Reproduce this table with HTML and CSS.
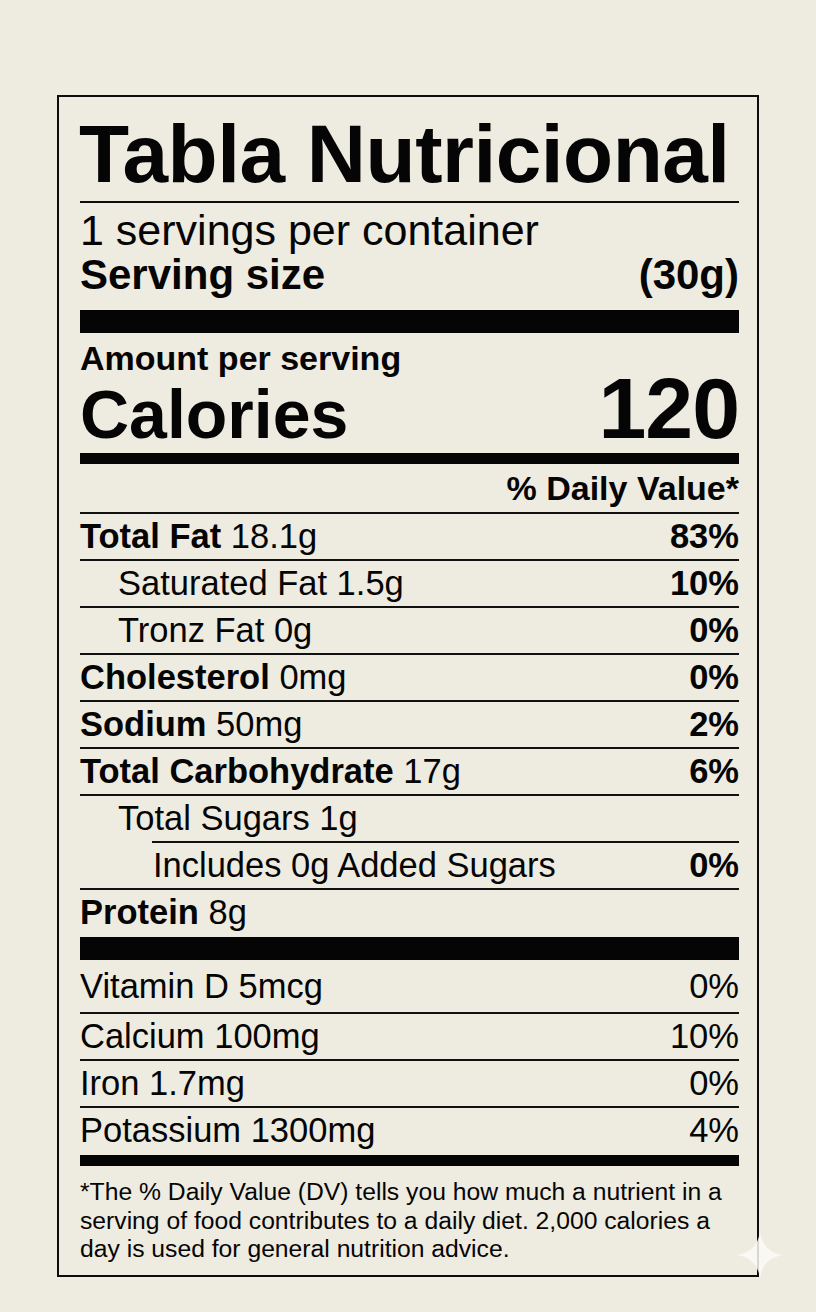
FILE: index.html
```html
<!DOCTYPE html>
<html lang="en">
<head>
<meta charset="utf-8">
<title>Tabla Nutricional</title>
<link rel="stylesheet" href="styles.css">
</head>
<body>
<main class="label">
  <h1 class="title">Tabla Nutricional</h1>
  <div class="rule"></div>
  <p class="servings">1 servings per container</p>
  <div class="size-row"><span>Serving size</span><span>(30g)</span></div>
  <div class="bar bar-thick"></div>
  <p class="amount">Amount per serving</p>
  <div class="calories-row"><span class="cal-label">Calories</span><span class="cal-value">120</span></div>
  <div class="bar bar-medium"></div>
  <div class="dv-head">% Daily Value*</div>

  <div class="row"><span><b>Total Fat</b> 18.1g</span><b>83%</b></div>
  <div class="row indent"><span>Saturated Fat 1.5g</span><b>10%</b></div>
  <div class="row indent"><span>Tronz Fat 0g</span><b>0%</b></div>
  <div class="row"><span><b>Cholesterol</b> 0mg</span><b>0%</b></div>
  <div class="row"><span><b>Sodium</b> 50mg</span><b>2%</b></div>
  <div class="row"><span><b>Total Carbohydrate</b> 17g</span><b>6%</b></div>
  <div class="row indent"><span>Total Sugars 1g</span></div>
  <div class="row indent2"><span>Includes 0g Added Sugars</span><b>0%</b></div>
  <div class="row row-last"><span><b>Protein</b> 8g</span></div>

  <div class="bar bar-thick bar-vit"></div>

  <div class="row vit-first"><span>Vitamin D 5mcg</span><span>0%</span></div>
  <div class="row"><span>Calcium 100mg</span><span>10%</span></div>
  <div class="row"><span>Iron 1.7mg</span><span>0%</span></div>
  <div class="row row-last"><span>Potassium 1300mg</span><span>4%</span></div>

  <div class="bar bar-medium"></div>
  <p class="footnote">*The % Daily Value (DV) tells you how much a nutrient in a serving of food contributes to a daily diet. 2,000 calories a day is used for general nutrition advice.</p>
</main>
<svg class="sparkle" width="48" height="48" viewBox="0 0 48 48" aria-hidden="true">
  <path d="M24 0 C25.5 14 34 22.5 48 24 C34 25.5 25.5 34 24 48 C22.5 34 14 25.5 0 24 C14 22.5 22.5 14 24 0 Z" fill="#fbfaf4" fill-opacity="0.85"/>
</svg>
</body>
</html>
```

FILE: styles.css
```css
html, body {
  margin: 0;
  padding: 0;
}

body {
  background: #eeebe1;
  color: #050505;
  font-family: "Liberation Sans", Arial, Helvetica, sans-serif;
  width: 816px;
  height: 1312px;
  overflow: hidden;
  position: relative;
}

.label {
  box-sizing: border-box;
  width: 702px;
  margin: 95px 0 0 57px;
  border: 2px solid #0d0d0d;
  padding: 0 18px 11px 21px;
  display: flex;
  flex-direction: column;
}

.title {
  margin: 17px 0 0 -1px;
  font-size: 82px;
  font-weight: 700;
  letter-spacing: -0.5px;
  line-height: 80px;
  height: 80px;
  white-space: nowrap;
}

.rule {
  margin-top: 7px;
  height: 2px;
  background: #0d0d0d;
}

.servings {
  margin: 5px 0 0;
  font-size: 43px;
  line-height: 44px;
}

.size-row {
  display: flex;
  justify-content: space-between;
  font-size: 42px;
  font-weight: 700;
  line-height: 46px;
}

.bar {
  background: #050505;
}

.bar-thick {
  margin-top: 12px;
  height: 23px;
}

.bar-medium {
  height: 11px;
}

.amount {
  margin: 7px 0 0;
  font-size: 34px;
  font-weight: 700;
  line-height: 36px;
}

.calories-row {
  display: flex;
  justify-content: space-between;
  align-items: baseline;
  font-weight: 700;
  margin-top: 2px;
  margin-bottom: 9px;
}

.cal-label {
  font-size: 68px;
  line-height: 60px;
}

.cal-value {
  font-size: 86px;
  line-height: 60px;
  letter-spacing: -1px;
}

.dv-head {
  text-align: right;
  font-size: 34px;
  font-weight: 700;
  line-height: 48px;
}

.row {
  box-sizing: border-box;
  height: 47px;
  border-top: 2px solid #111;
  display: flex;
  justify-content: space-between;
  font-size: 34.5px;
  line-height: 44px;
  white-space: nowrap;
}

.row b {
  font-weight: 700;
}

.indent {
  padding-left: 38px;
}

.indent2 {
  margin-left: 72px;
  padding-left: 1px;
}

.row-last {
  height: 49px;
}

.bar-vit {
  margin-top: 0;
}

.vit-first {
  border-top: 0;
  height: 52px;
  line-height: 52px;
}

.footnote {
  margin: 12px 0 0;
  font-size: 24.7px;
  line-height: 28.5px;
}

.sparkle {
  position: absolute;
  left: 736px;
  top: 1231px;
}
```
